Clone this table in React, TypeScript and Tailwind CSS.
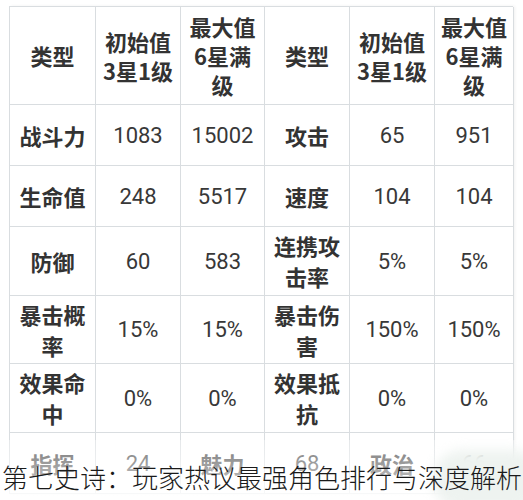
import React from 'react';

type Cell = { text: string; label?: boolean };

const cols = 'grid-cols-[86px_85px_84px_85px_85px_79px]';

const header = ['类型', '初始值\n3星1级', '最大值\n6星满\n级', '类型', '初始值\n3星1级', '最大值\n6星满\n级'];

const rows: { h: string; cells: Cell[] }[] = [
  {
    h: 'h-[61px]',
    cells: [
      { text: '战斗力', label: true },
      { text: '1083' },
      { text: '15002' },
      { text: '攻击', label: true },
      { text: '65' },
      { text: '951' },
    ],
  },
  {
    h: 'h-[61px]',
    cells: [
      { text: '生命值', label: true },
      { text: '248' },
      { text: '5517' },
      { text: '速度', label: true },
      { text: '104' },
      { text: '104' },
    ],
  },
  {
    h: 'h-[69px]',
    cells: [
      { text: '防御', label: true },
      { text: '60' },
      { text: '583' },
      { text: '连携攻\n击率', label: true },
      { text: '5%' },
      { text: '5%' },
    ],
  },
  {
    h: 'h-[68px]',
    cells: [
      { text: '暴击概\n率', label: true },
      { text: '15%' },
      { text: '15%' },
      { text: '暴击伤\n害', label: true },
      { text: '150%' },
      { text: '150%' },
    ],
  },
  {
    h: 'h-[69px]',
    cells: [
      { text: '效果命\n中', label: true },
      { text: '0%' },
      { text: '0%' },
      { text: '效果抵\n抗', label: true },
      { text: '0%' },
      { text: '0%' },
    ],
  },
  {
    h: 'h-[61px]',
    cells: [
      { text: '指挥', label: true },
      { text: '24' },
      { text: '魅力', label: true },
      { text: '68' },
      { text: '政治', label: true },
      { text: '66' },
    ],
  },
];

function Label({ text, header }: { text: string; header?: boolean }) {
  return (
    <div
      className={`whitespace-pre-line text-center font-bold text-[#333] text-[22px] ${
        header ? 'leading-[29px]' : 'leading-[31px]'
      } font-['Noto_Sans_CJK_SC',sans-serif]`}
    >
      {text}
    </div>
  );
}

export default function App() {
  return (
    <div className="relative h-[500px] w-[523px] overflow-hidden bg-white">
      <div className="pl-[9px] pt-[6px]">
        <div className={`grid ${cols} w-[504px] border-l border-t border-[#d9dde0] bg-white shadow-[2px_0_3px_rgba(0,0,0,0.06)]`}>
          {header.map((t, i) => (
            <div key={`h${i}`} className="flex h-[98px] items-center justify-center border-b border-r border-[#d9dde0]">
              <Label text={t} header />
            </div>
          ))}
          {rows.map((r, ri) =>
            r.cells.map((c, ci) => (
              <div
                key={`${ri}-${ci}`}
                className={`flex ${r.h} items-center justify-center border-b border-r border-[#d9dde0]`}
              >
                {c.label ? (
                  <Label text={c.text} />
                ) : (
                  <span className="font-['Roboto',sans-serif] text-[22px] text-[#383838]">{c.text}</span>
                )}
              </div>
            ))
          )}
        </div>
      </div>

      {/* fade over the bottom row */}
      <div className="pointer-events-none absolute bottom-0 left-0 h-[60px] w-full bg-gradient-to-b from-white/30 to-white/85" />
      <div className="pointer-events-none absolute bottom-[-10px] right-[-20px] h-[60px] w-[110px] rounded-full bg-[#eef3f0] blur-[6px]" />

      <div className="absolute left-[2px] top-[464px] whitespace-nowrap font-['Noto_Sans_CJK_SC',sans-serif] text-[26px] font-light leading-none text-[#1a1a1a]">
        第七史诗：玩家热议最强角色排行与深度解析
      </div>
    </div>
  );
}
